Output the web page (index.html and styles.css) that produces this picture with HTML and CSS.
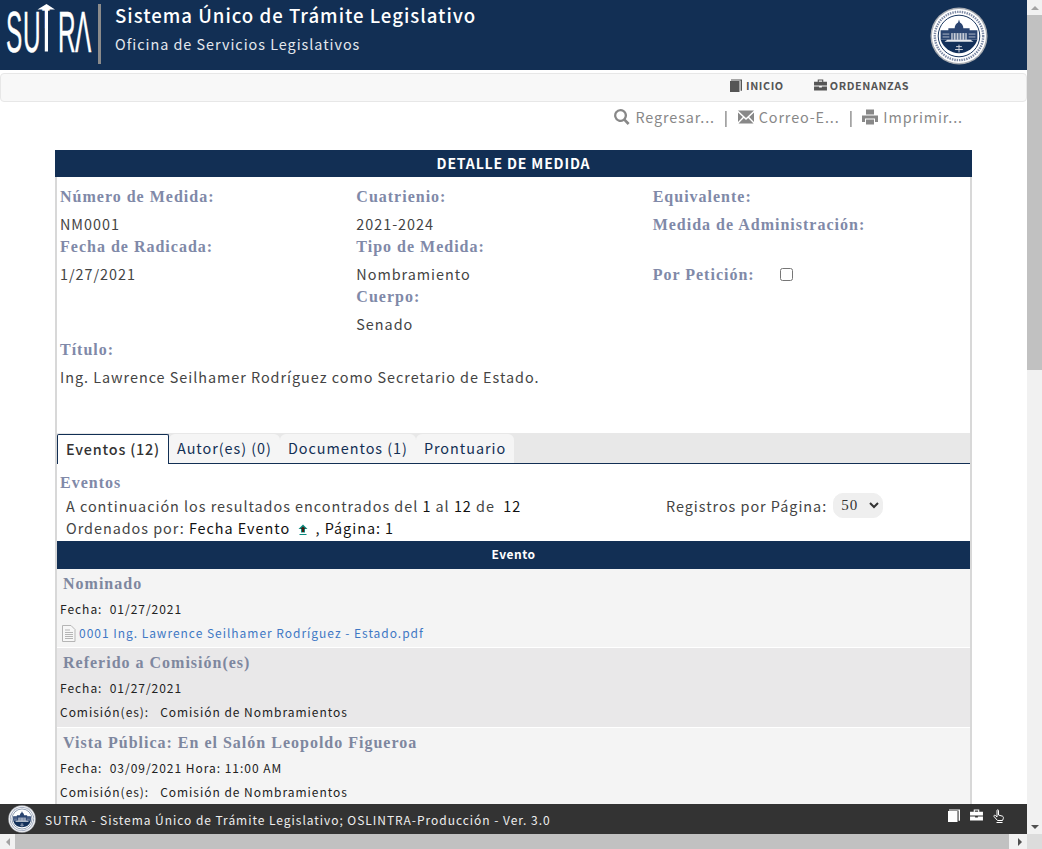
FILE: index.html
```html
<!DOCTYPE html>
<html lang="es">
<head>
<meta charset="utf-8">
<title>SUTRA - Detalle de Medida</title>
<link rel="stylesheet" href="styles.css">
</head>
<body>
<svg class="defs" width="0" height="0" aria-hidden="true">
  <defs>
    <symbol id="i-book" viewBox="0 0 12 13"><path d="M0 2h9.500v11H0zM1 .5h11v11.200h-1.400V1.600H1z"/></symbol>
    <symbol id="i-case" viewBox="0 0 14 13"><path fill-rule="evenodd" d="M4 .5h6v2.500h4v4H0V3h4zM5.200 1.600V3h3.600V1.600zM0 8h5.500v1.200h3V8H14v4.500H0z"/></symbol>
    <symbol id="i-search" viewBox="0 0 16 16"><path fill-rule="evenodd" d="M6.500 0a6.500 6.500 0 0 1 5.300 10.200l3.800 3.800-1.900 1.900-3.800-3.800A6.500 6.500 0 1 1 6.500 0zm0 2.300a4.200 4.200 0 1 0 0 8.400 4.200 4.200 0 0 0 0-8.400z"/></symbol>
    <symbol id="i-mail" viewBox="0 0 16 14"><path d="M0 .5h16L8 8zM0 2.500l4.800 4.500L0 12zM16 2.500L11.200 7 16 12zM5.800 8L8 10l2.200-2 5.300 5.500H.5z"/></symbol>
    <symbol id="i-print" viewBox="0 0 16 16"><path d="M4 .5h8v5H4zM0 6.500h16v6.500h-3V9.500H3V13H0zM4 10.500h8v5H4z"/></symbol>
    <symbol id="seal" viewBox="0 0 60 60">
      <circle cx="30" cy="30" r="29.500" fill="#a9adb3"/>
      <circle cx="30" cy="30" r="28" fill="#fff"/>
      <circle cx="30" cy="30" r="21.500" fill="none" stroke="#12305a" stroke-width="1"/>
      <circle cx="30" cy="30" r="25" fill="none" stroke="#7d8aa5" stroke-width="2.500" stroke-dasharray="1.500 1"/>
      <path d="M11 34a20 20 0 0 0 38 0z" fill="#12305a"/>
      <path d="M30 13l1 3c2 1 3.500 3.500 3.500 6H41v2h8v10H11V24h8v-2h6.500c0-2.500 1.500-5 3.500-6z" fill="#2a4470"/>
      <path d="M22 27h16v7H22z" fill="#c9ced8"/>
      <path d="M24 27v7M27 27v7M30 27v7M33 27v7M36 27v7" stroke="#2a4470" stroke-width="1"/>
      <path d="M13 28h7M40 28h7M13 31h7M40 31h7" stroke="#aeb6c6" stroke-width="1"/>
      <path d="M18 34h24l3 2H15z" fill="#e5e8ee"/>
      <path d="M26 44h8M30 39v8M27 41h6" stroke="#d5d9e2" stroke-width="1"/>
    </symbol>
  </defs>
</svg>

<div class="window">
  <div class="viewport">
    <header class="masthead">
      <div class="logo">
        <svg class="logo-mark" width="90" height="52" viewBox="0 0 90 52" aria-label="SUTRA">
          <text class="logo-text" transform="scale(.42 1)"><tspan x="0 40.500" y="47.500">SU</tspan><tspan class="logo-t" x="86" y="23.500">T</tspan><tspan x="123.800 164.300" y="47.500">RΛ</tspan></text>
          <path class="logo-arrow" d="M40.500 0L49 5.500H42V47.500H38.800V5.500H31.500z"/>
        </svg>
      </div>
      <div class="mast-titles">
        <h1 class="mast-title">Sistema Único de Trámite Legislativo</h1>
        <p class="mast-sub">Oficina de Servicios Legislativos</p>
      </div>
      <svg class="mast-seal" width="58" height="58"><use href="#seal"/></svg>
    </header>

    <nav class="navbar">
      <a class="nav-link"><svg width="12" height="13"><use href="#i-book"/></svg>INICIO</a>
      <a class="nav-link nav-link-wide"><svg width="13" height="12"><use href="#i-case"/></svg>ORDENANZAS</a>
    </nav>

    <div class="actions">
      <a class="action"><svg width="16" height="16"><use href="#i-search"/></svg>Regresar...</a>
      <span class="sep">|</span>
      <a class="action"><svg width="16" height="14"><use href="#i-mail"/></svg>Correo-E...</a>
      <span class="sep">|</span>
      <a class="action"><svg width="16" height="16"><use href="#i-print"/></svg>Imprimir...</a>
    </div>

    <section class="panel">
      <h2 class="panel-title">DETALLE DE MEDIDA</h2>
      <div class="panel-body">
        <div class="fields">
          <div class="col">
            <div class="label">Número de Medida:</div>
            <div class="value">NM0001</div>
            <div class="label">Fecha de Radicada:</div>
            <div class="value">1/27/2021</div>
          </div>
          <div class="col">
            <div class="label">Cuatrienio:</div>
            <div class="value">2021-2024</div>
            <div class="label">Tipo de Medida:</div>
            <div class="value">Nombramiento</div>
            <div class="label">Cuerpo:</div>
            <div class="value">Senado</div>
          </div>
          <div class="col col-flags">
            <div class="label label-tall">Equivalente:</div>
            <div class="label label-tall">Medida de Administración:</div>
            <div class="label label-check">Por Petición: <input class="check" type="checkbox"></div>
          </div>
        </div>
        <div class="label label-title">Título:</div>
        <div class="value value-title">Ing. Lawrence Seilhamer Rodríguez como Secretario de Estado.</div>

        <div class="tabs">
          <a class="tab tab-active">Eventos (12)</a>
          <a class="tab">Autor(es) (0)</a>
          <a class="tab">Documentos (1)</a>
          <a class="tab">Prontuario</a>
        </div>

        <div class="results-label">Eventos</div>
        <div class="results">
          <div class="results-text">
            <div class="results-line">A continuación los resultados encontrados del <b>1</b> al <b>12</b> de &nbsp;<b>12</b></div>
            <div class="results-line">Ordenados por: <b>Fecha Evento</b>
              <svg class="sort" width="10" height="12" viewBox="0 0 10 12"><path d="M5 .5L9.500 5H7v3.500H3V5H.5z" fill="#0b8a80"/><path d="M5 2.500L7.500 5H6v3H4V5H2.500z" fill="#4a1c10"/><path d="M1.500 10.500h7" stroke="#0b8a80"/></svg>
              <b>, Página: 1</b></div>
          </div>
          <div class="per-page">Registros por Página:
            <select class="select"><option>50</option></select>
          </div>
        </div>

        <div class="table-head">Evento</div>
        <article class="event">
          <h3 class="event-title">Nominado</h3>
          <div class="event-row">Fecha:&nbsp; 01/27/2021</div>
          <div class="event-row"><svg class="doc" width="15" height="17" viewBox="0 0 15 17"><path d="M1.500.5h8.500l4 4v12H1.500z" fill="#f7f7f7" stroke="#b5b5b5"/><path d="M4 5h5M4 7.500h8M4 9.500h8M4 11.500h8M4 13.500h8" stroke="#b5b5b5"/></svg><a class="doc-link">0001 Ing. Lawrence Seilhamer Rodríguez - Estado.pdf</a></div>
        </article>
        <article class="event event-alt">
          <h3 class="event-title">Referido a Comisión(es)</h3>
          <div class="event-row">Fecha:&nbsp; 01/27/2021</div>
          <div class="event-row">Comisión(es):&nbsp;&nbsp; Comisión de Nombramientos</div>
        </article>
        <article class="event">
          <h3 class="event-title">Vista Pública: En el Salón Leopoldo Figueroa</h3>
          <div class="event-row">Fecha:&nbsp; 03/09/2021 Hora: 11:00 AM</div>
          <div class="event-row">Comisión(es):&nbsp;&nbsp; Comisión de Nombramientos</div>
        </article>
      </div>
    </section>

    <footer class="statusbar">
      <svg class="foot-seal" width="28" height="28"><use href="#seal"/></svg>
      <span class="foot-text">SUTRA - Sistema Único de Trámite Legislativo; OSLINTRA-Producción - Ver. 3.0</span>
      <span class="foot-icons">
        <svg width="12" height="13"><use href="#i-book"/></svg>
        <svg width="13" height="12"><use href="#i-case"/></svg>
        <svg width="12" height="14" viewBox="0 0 12 14"><path d="M4 1.500c0-1 1.500-1 1.500 0V6l4 1.200c1 .4 1 1.500.8 2.300L9.500 11.500H4.500L1 7.500c-.5-1 .7-1.700 1.500-1L4 8zM3.500 13.500h6" fill="none" stroke="#fff"/></svg>
      </span>
    </footer>
  </div>

  <div class="vscroll">
    <span class="arrow arrow-up"></span>
    <span class="vthumb"></span>
    <span class="arrow arrow-down"></span>
  </div>
  <div class="hscroll">
    <span class="arrow arrow-left"></span>
    <span class="hthumb"></span>
    <span class="arrow arrow-right"></span>
  </div>
  <div class="corner"></div>
</div>
</body>
</html>
```
FILE: styles.css
```css
* { box-sizing: border-box; }
html, body { margin: 0; height: 100%; overflow: hidden; }
body {
  font-family: "Noto Sans CJK JP", "Noto Sans", sans-serif;
  font-size: 14.400px;
  color: #444;
  background: #fff;
  letter-spacing: .97px;
}
.defs { position: absolute; }
svg { fill: currentColor; flex: none; }

.window {
  display: grid;
  grid-template-columns: 1027px 15px;
  grid-template-rows: 834px 15px;
  height: 849px;
  width: 1042px;
}
.viewport { position: relative; overflow: hidden; }

/* scrollbars */
.vscroll, .hscroll { background: #f1f1f1; display: flex; align-items: center; }
.vscroll { flex-direction: column; }
.vthumb { display: block; width: 15px; height: 355px; background: #c1c1c1; }
.arrow { display: block; width: 15px; height: 15px; flex: none; position: relative; }
.arrow-down { margin-top: auto; }
.arrow-right { margin-left: auto; }
.arrow::after { content: ""; position: absolute; width: 0; height: 0; border: 4px solid transparent; }
.arrow-up::after { left: 3.500px; top: 1.500px; border-bottom: 4px solid #a3a3a3; }
.arrow-down::after { left: 3.500px; top: 5.500px; border-top: 4px solid #505050; }
.arrow-left::after { left: 1.500px; top: 3.500px; border-right: 4px solid #a3a3a3; }
.arrow-right::after { left: 5.500px; top: 3.500px; border-left: 4px solid #505050; }
.hthumb { display: block; height: 15px; width: 994px; background: #c1c1c1; }
.corner { background: #dcdcdc; }

/* masthead */
.masthead {
  height: 70px;
  background: #122f54;
  color: #fff;
  display: flex;
  align-items: flex-start;
}
.logo { width: 95px; height: 60px; margin: 4px 0 0 6px; border-right: 3px solid #8b8b8b; flex: none; }
.logo-mark { display: block; overflow: visible; }
.logo-text { font-family: "Liberation Sans", sans-serif; font-size: 58px; letter-spacing: 0; fill: #fff; stroke: #fff; stroke-width: .4px; }
.logo-t { font-size: 30px; }
.logo-arrow { fill: #fff; }
.mast-titles { margin-left: 14px; }
.mast-title { margin: 0; font-size: 18.600px; line-height: 30px; font-weight: 500; letter-spacing: 1px; }
.mast-sub { margin: 4px 0 0; font-size: 14.400px; line-height: 20px; color: #e4e8ee; }
.mast-seal { margin: 7px 39px 0 auto; }

/* nav */
.navbar {
  height: 29px;
  margin-top: 3px;
  background: #f8f8f8;
  border: 1px solid #e7e7e7;
  border-radius: 4px;
  display: flex;
  align-items: center;
  padding: 0 0 5px 729px;
  gap: 30px;
  color: #555;
}
.nav-link { display: flex; align-items: center; gap: 4px; font-size: 10.800px; font-weight: 700; letter-spacing: .6px; }
.nav-link-wide { gap: 3px; }

/* actions */
.actions {
  display: flex;
  justify-content: flex-end;
  align-items: center;
  height: 30px;
  padding: 0 64px 1px 0;
  color: #888;
  gap: 9px;
  letter-spacing: .88px;
}
.action { display: flex; align-items: center; gap: 5px; }
.sep { color: #555; will-change: transform; }

/* panel */
.panel { margin: 18px 55px 0; width: 917px; }
.panel-title {
  margin: 0;
  height: 27px;
  line-height: 27px;
  background: #122f54;
  color: #fff;
  text-align: center;
  font-size: 14px;
  font-weight: 700;
  letter-spacing: .85px;
}
.panel-body { border: solid #d8d8d8; border-width: 0 2px; }
.fields { display: grid; grid-template-columns: repeat(3, 296.330px); padding: 7px 0 0 3px; }
.col-flags { margin-top: -1px; }
.label {
  font-family: "Liberation Serif", serif;
  font-weight: 700;
  font-size: 16px;
  line-height: 25px;
  color: #8089a8;
  letter-spacing: 1px;
}
.value { height: 25px; line-height: 30px; color: #444; }
.label-tall { height: 28px; line-height: 28px; }
.label-check { margin-top: 23px; display: flex; align-items: center; gap: 25px; }
.check { margin: 0; width: 13px; height: 13px; }
.label-title { padding-left: 3px; margin-top: 3px; }
.value-title { padding-left: 3px; height: 71px; line-height: 30px; }

/* tabs */
.tabs {
  display: flex;
  height: 31px;
  background: #e8e8e8;
  border-bottom: 1px solid #122f54;
  padding-top: 1px;
}
.tab {
  height: 29px;
  padding: 0 8px;
  line-height: 28px;
  color: #122f54;
  background: #f5f5f5;
  border-radius: 6px 6px 0 0;
}
.tab-active {
  height: 30px;
  margin-bottom: -1px;
  color: #333;
  font-weight: 500;
  letter-spacing: .8px;
  background: #fff;
  border: 1px solid #122f54;
  border-bottom: none;
  border-radius: 2px 2px 0 0;
}
.results-label {
  font-family: "Liberation Serif", serif;
  font-weight: 700;
  font-size: 16px;
  letter-spacing: 1px;
  color: #8089a8;
  padding: 8px 0 0 3px;
  line-height: 22px;
}
.results { display: flex; padding: 1px 0 0 9px; }
.results-text { width: 600px; }
.results-line { line-height: 22px; color: #444; }
.results-line b { font-weight: 400; color: #111; }
.sort { margin: 0 3px 0 4px; vertical-align: -2px; }
.per-page { display: flex; align-items: center; gap: 6px; height: 20px; color: #444; }
.select {
  width: 50px;
  height: 25px;
  font-family: "Liberation Serif", serif;
  font-size: 15px;
  color: #333;
  background: #efefef;
  border: 1px solid #efefef;
  border-radius: 10px;
  letter-spacing: 1px;
  padding-left: 3px;
}
.table-head {
  height: 28px;
  margin-top: 2px;
  background: #122f54;
  color: #fff;
  text-align: center;
  line-height: 26px;
  font-size: 12px;
  font-weight: 700;
  letter-spacing: .5px;
}
.event { background: #f4f4f4; padding: 3px 3px 2px; border-bottom: 1px solid #fff; height: 79.400px; }
.event-alt { background: #e9e8e9; }
.event-title {
  margin: 0 0 1px 3px;
  font-family: "Liberation Serif", serif;
  font-weight: 700;
  font-size: 16px;
  line-height: 24px;
  color: #7e879f;
  letter-spacing: 1px;
}
.event-row { font-size: 12px; line-height: 24px; letter-spacing: .97px; color: #222; display: flex; align-items: center; white-space: pre; }
.doc { margin: 0 3px 0 1px; }
.doc-link { color: #3f78c4; }

/* status bar */
.statusbar {
  position: absolute;
  left: 0;
  right: 0;
  bottom: 0;
  height: 30px;
  background: #333;
  color: #eee;
  display: flex;
  align-items: center;
  font-size: 12px;
  letter-spacing: .96px;
}
.foot-seal { margin-left: 8px; }
.foot-text { margin-left: 9px; }
.foot-icons { margin: -6px 22px 0 auto; display: flex; gap: 10px; color: #fff; }
```
